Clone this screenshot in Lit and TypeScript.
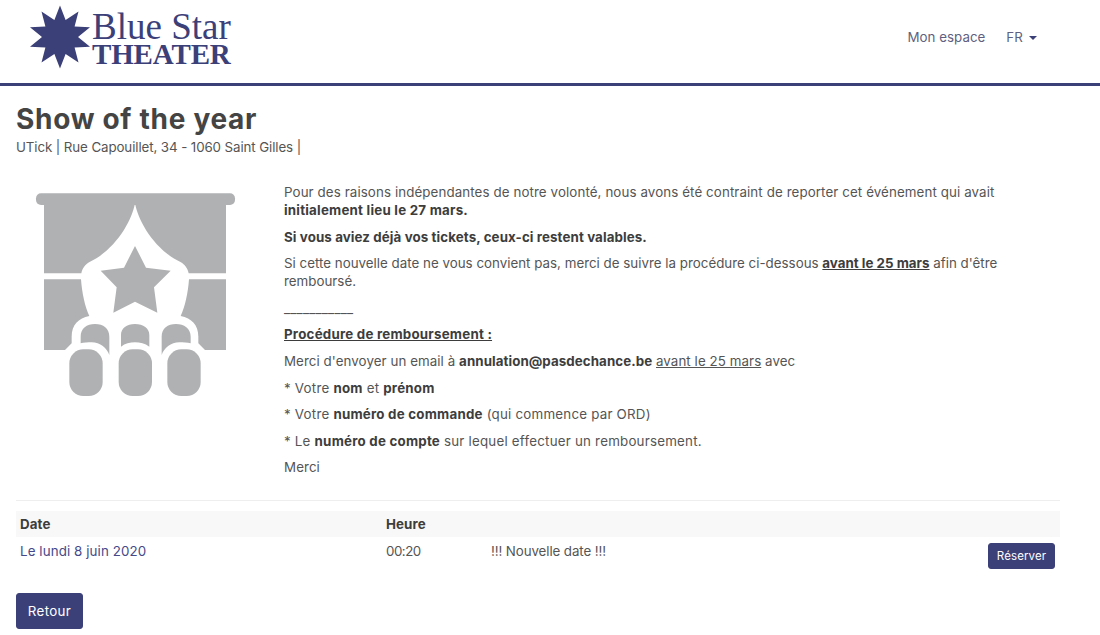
import { LitElement, html, css } from "lit";
import { customElement } from "lit/decorators.js";

const starPoints = (cx: number, cy: number, R: number, r: number, n: number) => {
  const pts: string[] = [];
  for (let i = 0; i < n * 2; i++) {
    const a = (Math.PI * i) / n - Math.PI / 2;
    const rad = i % 2 ? r : R;
    pts.push(`${(cx + rad * Math.cos(a)).toFixed(1)},${(cy + rad * Math.sin(a)).toFixed(1)}`);
  }
  return pts.join(" ");
};

@customElement("app-root")
export class AppRoot extends LitElement {
  static styles = css`
    :host {
      display: block;
      font-family: Inter, "Liberation Sans", sans-serif;
      font-size: 13.33px;
      line-height: 18px;
      color: #555;
      letter-spacing: 0.1px;
    }
    b { color: #3d3d3d; }
    .nav {
      height: 83px;
      border-bottom: 3px solid #3c4079;
      display: flex;
      align-items: flex-start;
      justify-content: space-between;
    }
    .brand {
      display: flex;
      margin-left: 29px;
      margin-top: 5px;
      gap: 1px;
      color: #3c4079;
      font-family: "Liberation Serif", serif;
    }
    .brand svg { display: block; }
    .brand-text { display: flex; flex-direction: column; }
    .blue { font-size: 37px; line-height: 33px; margin-top: 4.5px; letter-spacing: 0; }
    .theater { font-size: 29px; line-height: 22px; font-weight: 700; letter-spacing: -0.15px; }
    .links { display: flex; gap: 21px; margin: 28px 63px 0 0; color: #5f5f80; }
    .espace { letter-spacing: 0.02px; }
    .caret {
      display: inline-block;
      margin-left: 6px;
      vertical-align: 2px;
      border-top: 4px solid #3c4079;
      border-left: 4px solid transparent;
      border-right: 4px solid transparent;
    }
    main { padding: 0 40px 0 16px; }
    h1 { margin: 17px 0 0; font-size: 28px; line-height: 33px; font-weight: 700; color: #444; letter-spacing: 0.7px; }
    .venue { margin-top: 2px; letter-spacing: -0.1px; }
    .event { display: flex; margin-top: 24px; }
    .pic { flex: 0 0 268px; }
    .pic svg { display: block; margin-left: 4px; }
    .text { flex: 1; padding-top: 3px; }
    p { margin: 0 0 8.6px; }
    u { text-underline-offset: 1px; }
    .p-date { letter-spacing: 0.01px; }
    .p-mail { letter-spacing: 0.07px; }
    .p-wide { letter-spacing: 0.22px; }
    hr { border: 0; border-top: 1px solid #eee; margin: 15px 0 10px; }
    .grid { display: grid; grid-template-columns: 366px 105px 1fr auto; }
    .th { background: #f8f8f8; font-weight: 700; padding: 4px; height: 18px; color: #3d3d3d; }
    .td { padding: 5px 4px 0; }
    .link { color: #45498a; }
    .time { letter-spacing: -0.5px; }
    .note { letter-spacing: -0.1px; }
    .btn {
      background: #3c4079;
      color: #fff;
      border: 1px solid #3c4079;
      border-radius: 3px;
      display: inline-block;
      box-sizing: border-box;
      font: inherit;
    }
    .small { font-size: 11.5px; width: 67px; height: 26px; line-height: 24px; text-align: center; }
    .cell-btn { padding: 6px 5px 0 0; justify-self: end; }
    .back { width: 67px; height: 36px; line-height: 34px; text-align: center; margin-top: 24px; display: block; letter-spacing: 0.35px; }
  `;

  render() {
    return html`
      <header class="nav">
        <div class="brand">
          <svg width="62" height="64" viewBox="0 0 62 64">
            <polygon points=${starPoints(31, 32, 31.5, 18, 10)} fill="#3c4079"></polygon>
          </svg>
          <div class="brand-text">
            <span class="blue">Blue Star</span>
            <span class="theater">THEATER</span>
          </div>
        </div>
        <nav class="links"><span class="espace">Mon espace</span><span>FR<i class="caret"></i></span></nav>
      </header>
      <main>
        <h1>Show of the year</h1>
        <div class="venue">UTick | Rue Capouillet, 34 - 1060 Saint Gilles |</div>
        <section class="event">
          <div class="pic">
            <svg width="230" height="230" viewBox="0 0 690 690" fill="#b0b1b3">
              <rect x="48" y="40" width="597" height="35" rx="15"></rect>
              <path d="M72 70H345C335 125 285 210 210 245C195 253 187 265 184 280H72Z"></path>
              <path d="M618 70H345C355 125 405 210 480 245C495 253 503 265 506 280H618Z"></path>
              <path d="M72 298H183C186 340 195 380 208 408C175 415 155 435 155 470V490L135 510H72Z"></path>
              <path d="M618 298H507C504 340 495 380 482 408C515 415 535 435 535 470V490L555 510H618Z"></path>
              <polygon points="345,198 378,263 452,272 402,322 412,398 345,365 280,398 290,322 242,272 312,263"></polygon>
              <path d="M182 490V470C182 445 200 432 225 432C250 432 268 445 268 470V525C262 505 240 487 215 487C205 487 190 488 182 490Z"></path>
              <path d="M303 500V465C303 445 320 432 345 432C370 432 388 445 388 465V500C375 490 360 487 345 487C330 487 315 490 303 500Z"></path>
              <path d="M512 490V470C512 445 492 432 468 432C443 432 425 445 425 470V525C431 505 453 487 478 487C488 487 503 488 512 490Z"></path>
              <rect x="148" y="508" width="100" height="140" rx="42"></rect>
              <rect x="296" y="508" width="100" height="140" rx="42"></rect>
              <rect x="442" y="508" width="100" height="140" rx="42"></rect>
            </svg>
          </div>
          <div class="text">
            <p>Pour des raisons indépendantes de notre volonté, nous avons été contraint de reporter cet événement qui avait <b class="p-wide">initialement lieu le 27 mars.</b></p>
            <p><b>Si vous aviez déjà vos tickets, ceux-ci restent valables.</b></p>
            <p class="p-date">Si cette nouvelle date ne vous convient pas, merci de suivre la procédure ci-dessous <b><u>avant le 25 mars</u></b> afin d'être remboursé.</p>
            <p class="p-wide">___________</p>
            <p class="p-wide"><b><u>Procédure de remboursement :</u></b></p>
            <p class="p-mail">Merci d'envoyer un email à <b>annulation@pasdechance.be</b> <u>avant le 25 mars</u> avec</p>
            <p class="p-wide">* Votre <b>nom</b> et <b>prénom</b></p>
            <p class="p-wide">* Votre <b>numéro de commande</b> (qui commence par ORD)</p>
            <p class="p-wide">* Le <b>numéro de compte</b> sur lequel effectuer un remboursement.</p>
            <p>Merci</p>
          </div>
        </section>
        <hr />
        <div class="grid">
          <div class="th">Date</div><div class="th">Heure</div><div class="th"></div><div class="th"></div>
          <div class="td link">Le lundi 8 juin 2020</div>
          <div class="td time">00:20</div>
          <div class="td note">!!! Nouvelle date !!!</div>
          <div class="cell-btn"><span class="btn small">Réserver</span></div>
        </div>
        <span class="btn back">Retour</span>
      </main>
    `;
  }
}
